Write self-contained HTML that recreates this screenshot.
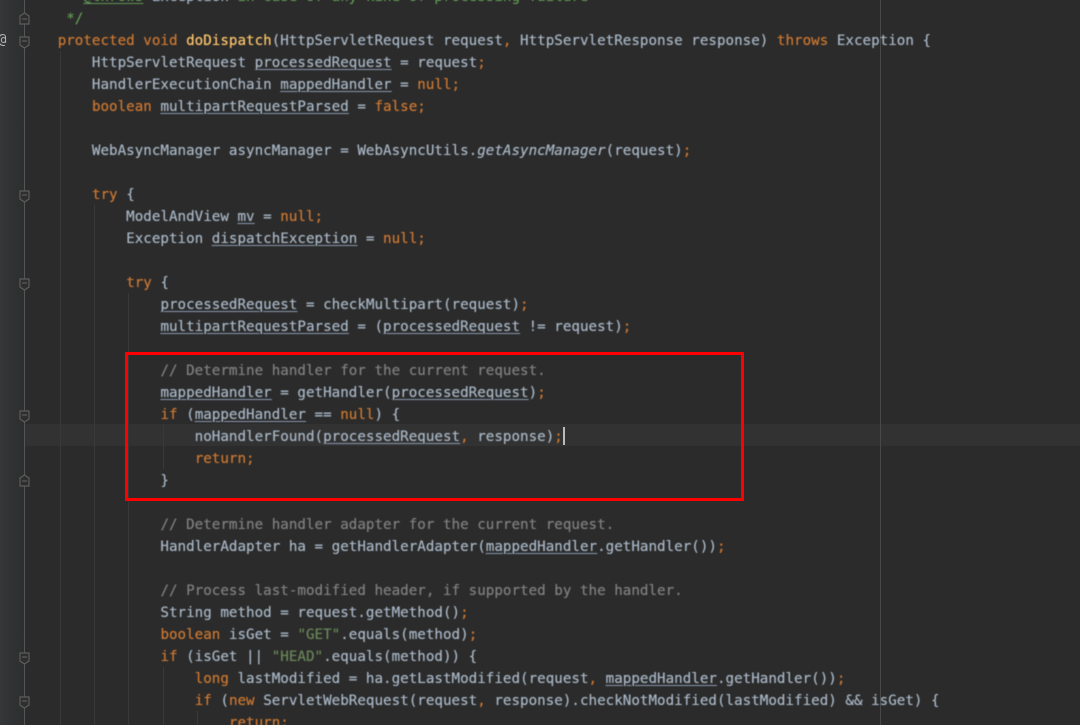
<!DOCTYPE html>
<html>
<head>
<meta charset="utf-8">
<style>
html,body{margin:0;padding:0;width:1080px;height:725px;overflow:hidden;background:#2b2b2b}
#root{position:relative;width:1080px;height:725px;overflow:hidden;background:#2b2b2b}
.abs{position:absolute}
pre{position:absolute;left:57.700px;top:-14px;margin:0;font:14.2px/22px "DejaVu Sans Mono","Liberation Mono",monospace;letter-spacing:.02px;color:#a9b7c6;filter:blur(.4px);text-shadow:0 0 .4px currentColor;white-space:pre}
b{font-weight:normal;color:#cc7832}
i.m{font-style:normal;color:#ffc66d}
i.s{font-style:italic}
u{text-decoration:underline;text-decoration-thickness:1px;text-underline-offset:2px;text-decoration-color:#8b9ab0}
.c{color:#808080}
.g{color:#6a8759}
.j{color:#629755}
.jt{color:#629755;text-decoration:underline;text-underline-offset:2px}
</style>
</head>
<body>
<div id="root">
<div class="abs" style="left:0;top:0;width:25px;height:725px;background:linear-gradient(90deg,#343638,#2d2e2f)"></div>
<div class="abs" style="left:25px;top:424px;width:1055px;height:22px;background:#323232"></div>
<div class="abs" style="left:24px;top:0;width:1px;height:725px;background:#555"></div>
<div class="abs" style="left:60px;top:51px;width:1px;height:674px;background:#393939"></div>
<div class="abs" style="left:94px;top:205px;width:1px;height:520px;background:#393939"></div>
<div class="abs" style="left:128px;top:293px;width:1px;height:432px;background:#393939"></div>
<div class="abs" style="left:163px;top:425px;width:1px;height:44px;background:#393939"></div>
<div class="abs" style="left:163px;top:667px;width:1px;height:58px;background:#393939"></div>
<div class="abs" style="left:197px;top:711px;width:1px;height:14px;background:#393939"></div>
<div class="abs" style="left:880px;top:0;width:1px;height:725px;background:#484848"></div>
<svg class="abs" style="left:0;top:0" width="40" height="725" fill="#2e2e2e" stroke="#5c5c5c" stroke-width="1.2">
<path d="M20 24V16L24.500 13L29 16V24Z"/><path d="M22 19H27"/>
<path d="M20 37H29V45L24.500 48L20 45Z"/><path d="M22 41H27"/>
<path d="M20 191H29V199L24.500 202L20 199Z"/><path d="M22 195H27"/>
<path d="M20 279H29V287L24.500 290L20 287Z"/><path d="M22 283H27"/>
<path d="M20 411H29V419L24.500 422L20 419Z"/><path d="M22 415H27"/>
<path d="M20 486V478L24.500 475L29 478V486Z"/><path d="M22 481H27"/>
<path d="M20 653H29V661L24.500 664L20 661Z"/><path d="M22 657H27"/>
<path d="M20 697H29V705L24.500 708L20 705Z"/><path d="M22 701H27"/>
</svg>
<div class="abs" style="left:-2px;top:31px;font:14px/18px 'DejaVu Sans Mono',monospace;color:#b5b5b5">@</div>
<pre><span class="j"> * <span class="jt">@throws</span> <span style="color:#a9b7c6">Exception</span> in case of any kind of processing failure</span>
<span class="j"> */</span>
<b>protected void </b><i class="m">doDispatch</i>(HttpServletRequest request<b>, </b>HttpServletResponse response) <b>throws </b>Exception {
    HttpServletRequest <u>processedRequest</u> = request<b>;</b>
    HandlerExecutionChain <u>mappedHandler</u> = <b>null;</b>
    <b>boolean </b><u>multipartRequestParsed</u> = <b>false;</b>

    WebAsyncManager asyncManager = WebAsyncUtils.<i class="s">getAsyncManager</i>(request)<b>;</b>

    <b>try </b>{
        ModelAndView <u>mv</u> = <b>null;</b>
        Exception <u>dispatchException</u> = <b>null;</b>

        <b>try </b>{
            <u>processedRequest</u> = checkMultipart(request)<b>;</b>
            <u>multipartRequestParsed</u> = (<u>processedRequest</u> != request)<b>;</b>

            <span class="c">// Determine handler for the current request.</span>
            <u>mappedHandler</u> = getHandler(<u>processedRequest</u>)<b>;</b>
            <b>if </b>(<u>mappedHandler</u> == <b>null</b>) {
                noHandlerFound(<u>processedRequest</u><b>, </b>response)<b>;</b>
                <b>return;</b>
            }

            <span class="c">// Determine handler adapter for the current request.</span>
            HandlerAdapter ha = getHandlerAdapter(<u>mappedHandler</u>.getHandler())<b>;</b>

            <span class="c">// Process last-modified header, if supported by the handler.</span>
            String method = request.getMethod()<b>;</b>
            <b>boolean </b>isGet = <span class="g">"GET"</span>.equals(method)<b>;</b>
            <b>if </b>(isGet || <span class="g">"HEAD"</span>.equals(method)) {
                <b>long </b>lastModified = ha.getLastModified(request<b>, </b><u>mappedHandler</u>.getHandler())<b>;</b>
                <b>if </b>(<b>new </b>ServletWebRequest(request<b>, </b>response).checkNotModified(lastModified) &amp;&amp; isGet) {
                    <b>return;</b></pre>
<div class="abs" style="left:562.500px;top:427px;width:2px;height:18px;background:#bbb"></div>
<div class="abs" style="left:125px;top:352px;width:613px;height:143px;border:3px solid #f00"></div>
</div>
</body>
</html>
